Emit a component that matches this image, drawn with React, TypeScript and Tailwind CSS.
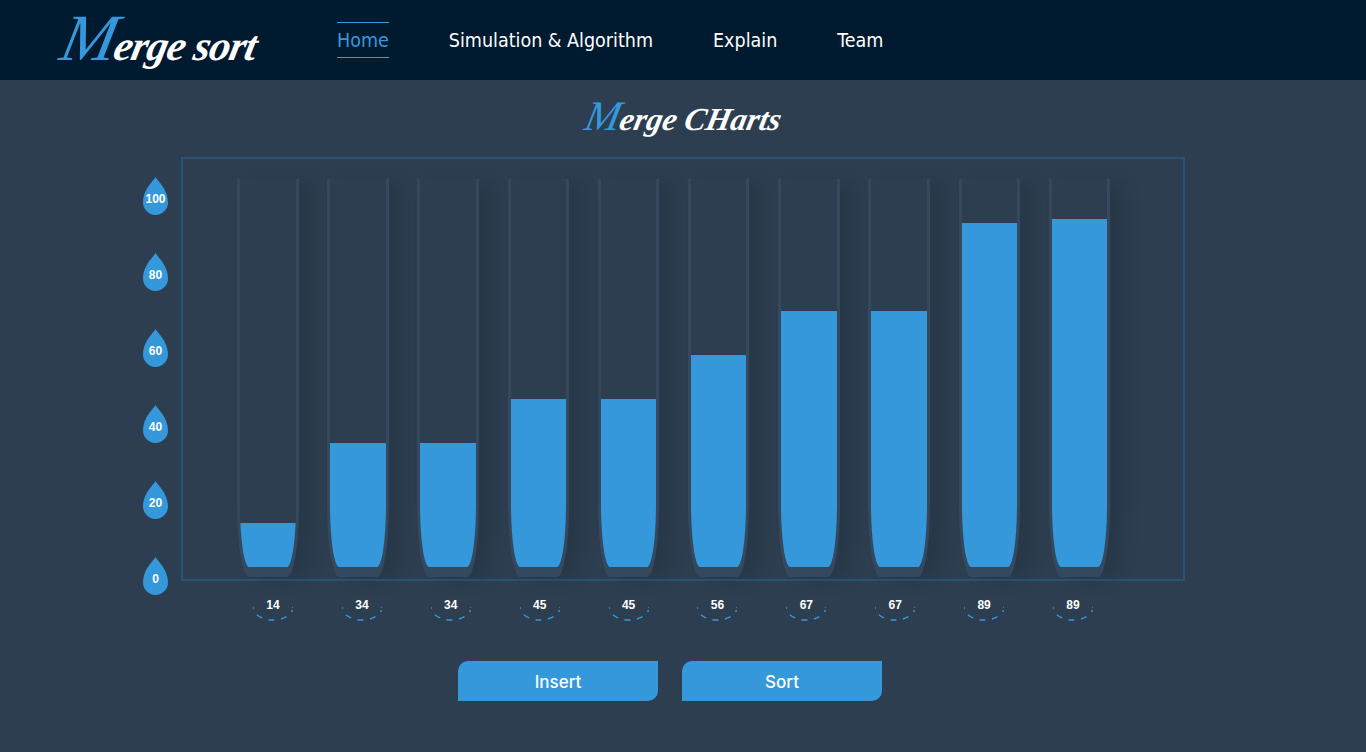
import React from "react";

const nav = ["Simulation & Algorithm", "Explain", "Team"];
const bars = [
  { v: 14, h: 44 },
  { v: 34, h: 124 },
  { v: 34, h: 124 },
  { v: 45, h: 168 },
  { v: 45, h: 168 },
  { v: 56, h: 212 },
  { v: 67, h: 256 },
  { v: 67, h: 256 },
  { v: 89, h: 344 },
  { v: 89, h: 348 },
];
const ticks = [100, 80, 60, 40, 20, 0];

function Drop({ label }: { label: number }) {
  return (
    <div className="relative h-[38px] w-[25px]">
      <svg width="25" height="38" viewBox="0 0 25 38" className="block">
        <path d="M12.5 0 C14.5 4 25 12 25 25.5 A12.5 12.5 0 0 1 0 25.5 C0 12 10.5 4 12.5 0Z" fill="#3498db" />
      </svg>
      <span className="absolute left-0 right-0 top-[15px] text-center font-['Liberation_Sans',sans-serif] text-[12px] font-bold leading-[14px] text-white">
        {label}
      </span>
    </div>
  );
}

function Tube({ h }: { h: number }) {
  return (
    <div className="flex h-[398px] w-[61.5px] flex-col justify-end overflow-hidden rounded-b-[12px_72px] border-x-[3px] border-b-[10px] border-[#34495e] shadow-[14px_3px_18px_rgba(0,0,0,0.1)]">
      <div className="w-full bg-[#3498db]" style={{ height: h }} />
    </div>
  );
}

function Label({ v }: { v: number }) {
  return (
    <div className="relative h-[31px] w-10 pt-2 text-center font-['Liberation_Sans',sans-serif] text-[12px] font-bold leading-[14px] text-white">
      {v}
      <svg width="40" height="31" viewBox="0 0 40 31" className="absolute left-0 top-0" fill="none">
        <path d="M0 17 A20 13 0 0 0 40 17" stroke="#3498db" strokeWidth="1.5" strokeDasharray="2 7 6 6.5 6 6.5 6 7 2" />
      </svg>
    </div>
  );
}

export default function App() {
  return (
    <div className="h-[752px] w-[1366px] overflow-hidden bg-[#2c3e50]">
      <header className="flex h-20 items-center bg-[#001a30] pl-[62px]">
        <div className="w-[275px] -skew-x-12 pb-1 font-['Liberation_Serif',cursive] text-[42px] font-bold italic leading-none tracking-[-1px] text-white">
          <span className="text-[66px] font-normal text-[#3498db]">M</span>erge sort
        </div>
        <nav className="flex gap-[60px] font-['DejaVu_Sans',sans-serif] text-[19.5px] leading-[32px] text-white font-stretch-condensed">
          <a className="border-y border-[#3498db] pt-[2px] text-[#3498db]">Home</a>
          {nav.map((n) => (
            <a key={n} className="border-y border-transparent pt-[2px]">{n}</a>
          ))}
        </nav>
      </header>

      <h1 className="-skew-x-12 pl-1 pt-[15px] text-center font-['Liberation_Serif',cursive] text-[32px] font-bold italic leading-[46px] text-white">
        <span className="text-[42px] font-normal leading-none text-[#3498db]">M</span>erge CHarts
      </h1>

      <div className="flex pl-[143px] pt-[15px]">
        <div className="mt-5 flex h-[418px] flex-col justify-between">
          {ticks.map((t) => (
            <Drop key={t} label={t} />
          ))}
        </div>
        <div className="ml-[13px]">
          <div className="flex h-[424px] w-[1004px] gap-[28.7px] border-2 border-[#2c5272] pl-[54px] pt-5">
            {bars.map((b, i) => (
              <Tube key={i} h={b.h} />
            ))}
          </div>
          <div className="ml-[72px] mt-[9px] flex gap-[48.9px]">
            {bars.map((b, i) => (
              <Label key={i} v={b.v} />
            ))}
          </div>
        </div>
      </div>

      <div className="mt-10 flex gap-6 pl-[458px]">
        {["Insert", "Sort"].map((t) => (
          <button
            key={t}
            className="h-10 w-[200px] rounded-tl-[10px] rounded-br-[10px] bg-[#3498db] pt-1 font-['Inter',sans-serif] text-[17px] font-medium text-white"
          >
            {t}
          </button>
        ))}
      </div>
    </div>
  );
}
